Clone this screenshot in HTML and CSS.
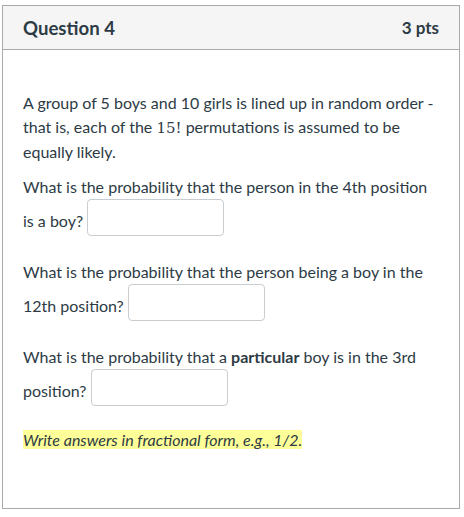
FILE: index.html
```html
<!DOCTYPE html>
<html lang="en">
<head>
<meta charset="utf-8">
<title>Question 4</title>
<link rel="stylesheet" href="styles.css">
</head>
<body>
<div class="question">
  <div class="header">
    <span class="name">Question 4</span>
    <span class="points">3 pts</span>
  </div>
  <div class="text">
    <p class="intro">A group of 5 boys and 10 girls is lined up in random order - that is, each of the <span class="math">15!</span> permutations is assumed to be equally likely.</p>
    <p class="ask">What is the probability that the person in the 4th position is a boy? <input class="answer" type="text" aria-label="answer 1"></p>
    <p class="ask">What is the probability that the person being a boy in the 12th position? <input class="answer" type="text" aria-label="answer 2"></p>
    <p class="ask">What is the probability that a <strong>particular</strong> boy is in the 3rd position? <input class="answer" type="text" aria-label="answer 3"></p>
    <p class="note"><em class="mark">Write answers in fractional form, e.g., 1/2.</em></p>
  </div>
</div>
</body>
</html>
```
FILE: styles.css
```css
html, body {
  margin: 0;
  padding: 0;
  background: #fff;
}
body {
  padding: 5px 4px 0 2px;
  font-family: Lato, "Open Sans", sans-serif;
  color: #2d3b45;
}
.question {
  width: 456px;
  height: 502px;
  border: 1px solid #a9a9a9;
  box-sizing: content-box;
}
.header {
  display: flex;
  justify-content: space-between;
  align-items: center;
  height: 44px;
  padding: 0 20px;
  background: #f5f5f5;
  border-bottom: 1px solid #a9a9a9;
  box-sizing: border-box;
  font-weight: bold;
}
.name {
  font-size: 18.6px;
}
.points {
  font-size: 17px;
  color: #2d3b45;
}
.text {
  padding: 41px 20px 0 20px;
  font-size: 16px;
  line-height: 24px;
}
.text p {
  margin: 0 0 11px;
}
.text p.ask {
  margin-bottom: 24px;
}
.text p.note {
  margin-top: -2px;
}
.math {
  font-family: "DejaVu Serif", "Liberation Serif", serif;
  font-size: 15px;
}
.answer {
  display: inline-block;
  width: 137px;
  height: 37px;
  box-sizing: border-box;
  border: 1px solid #c7cdd1;
  border-radius: 4px;
  background: #fff;
  padding: 0 8px;
  margin: 0;
  font: inherit;
  vertical-align: 3px;
}
.mark {
  background: #ffff99;
  font-style: italic;
}
```
